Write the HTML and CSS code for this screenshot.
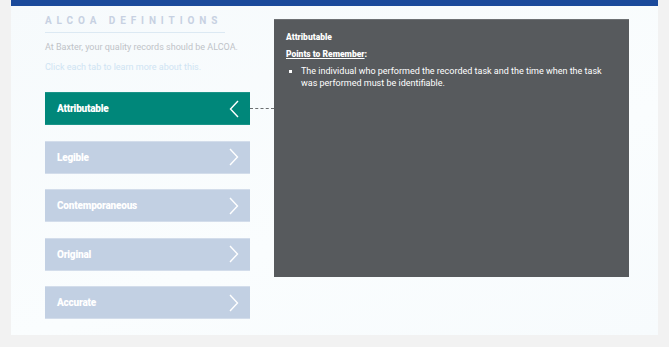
FILE: index.html
```html
<!DOCTYPE html>
<html lang="en">
<head>
  <meta charset="UTF-8">
  <title>ALCOA Definitions</title>
  <link rel="stylesheet" href="styles.css">
</head>
<body>
  <div class="card">
    <div class="topbar"></div>
    <div class="content">
      <!-- Left column -->
      <div class="left">
        <h2 class="title">ALCOA DEFINITIONS</h2>
        <p class="intro">At Baxter, your quality records should be ALCOA.</p>
        <p class="hint">Click each tab to learn more about this.</p>

        <div class="tabs">
          <div class="tab active">Attributable<span class="chev">
            <svg width="10" height="18" viewBox="0 0 10 18"><path d="M9 1 L1.5 9 L9 17" fill="none" stroke="#fff" stroke-width="1.4"/></svg></span>
            <span class="dash"></span>
          </div>
          <div class="tab">Legible<span class="chev">
            <svg width="10" height="18" viewBox="0 0 10 18"><path d="M1 1 L8.5 9 L1 17" fill="none" stroke="#fff" stroke-width="1.4"/></svg></span></div>
          <div class="tab">Contemporaneous<span class="chev">
            <svg width="10" height="18" viewBox="0 0 10 18"><path d="M1 1 L8.5 9 L1 17" fill="none" stroke="#fff" stroke-width="1.4"/></svg></span></div>
          <div class="tab">Original<span class="chev">
            <svg width="10" height="18" viewBox="0 0 10 18"><path d="M1 1 L8.5 9 L1 17" fill="none" stroke="#fff" stroke-width="1.4"/></svg></span></div>
          <div class="tab">Accurate<span class="chev">
            <svg width="10" height="18" viewBox="0 0 10 18"><path d="M1 1 L8.5 9 L1 17" fill="none" stroke="#fff" stroke-width="1.4"/></svg></span></div>
        </div>
      </div>

      <!-- Detail panel -->
      <div class="panel">
        <div class="panel-title">Attributable</div>
        <div class="panel-sub"><u>Points to Remember</u>:</div>
        <ul>
          <li>The individual who performed the recorded task and the time when the task was performed must be identifiable.</li>
        </ul>
      </div>
    </div>
  </div>
</body>
</html>
```

FILE: styles.css
```css
html, body {
  margin: 0;
  padding: 0;
}

body {
  background: #f2f2f2;
  font-family: Roboto, "Liberation Sans", sans-serif;
  width: 669px;
  height: 347px;
  overflow: hidden;
}

.card {
  margin-left: 11px;
  width: 647px;
  height: 335px;
  background: linear-gradient(160deg, #f6fafc, #fafdfe 60%, #f7fbfd);
}

.topbar {
  height: 6px;
  background: #1b4a9b;
}

.content {
  display: flex;
  padding-left: 34px;
}

.left {
  width: 205px;
}

.title {
  margin: 9px 0 0;
  padding-bottom: 5px;
  width: 180px;
  white-space: nowrap;
  font-size: 10px;
  font-weight: bold;
  letter-spacing: 4.9px;
  color: #c7d1e2;
  border-bottom: 1px solid #dce9f3;
  line-height: 12px;
}

.intro {
  margin: 9px 0 0;
  font-size: 9px;
  color: #bfc3c8;
  line-height: 11px;
}

.hint {
  margin: 9px 0 0;
  font-size: 9px;
  color: #cfe4f3;
  line-height: 11px;
}

.tabs {
  margin-top: 19px;
  display: flex;
  flex-direction: column;
  gap: 15.5px;
}

.tab {
  position: relative;
  height: 33px;
  box-sizing: border-box;
  padding: 0 12px;
  display: flex;
  align-items: center;
  justify-content: space-between;
  background: #c2d0e3;
  border-top: 1px solid #d3ddeb;
  border-bottom: 1px solid #d3ddeb;
  color: #fff;
  font-size: 10px;
  font-weight: 900;
  letter-spacing: -0.2px;
}

.tab.active {
  background: #00877a;
  border-color: #1a9488;
}

.chev {
  display: flex;
  margin-right: -1px;
}

.dash {
  position: absolute;
  left: 205px;
  top: 15px;
  width: 24px;
  border-top: 1.5px dashed #6b6e70;
}

.panel {
  margin-top: 13px;
  margin-left: 24px;
  width: 355px;
  height: 258px;
  box-sizing: border-box;
  background: #575a5d;
  border-top: 1px solid #6e7174;
  padding: 10px 14px 10px 12px;
  color: #fff;
  font-size: 8.5px;
  line-height: 12px;
}

.panel-title {
  font-weight: 900;
  margin-top: 1px;
}

.panel-sub {
  font-weight: 900;
  margin-top: 5px;
}

.panel ul {
  margin: 5px 0 0;
  padding-left: 15px;
  list-style: none;
}

.panel li {
  position: relative;
  font-size: 9px;
}

.panel li::before {
  content: "";
  position: absolute;
  left: -12px;
  top: 5px;
  width: 3px;
  height: 3px;
  background: #fff;
}
```
